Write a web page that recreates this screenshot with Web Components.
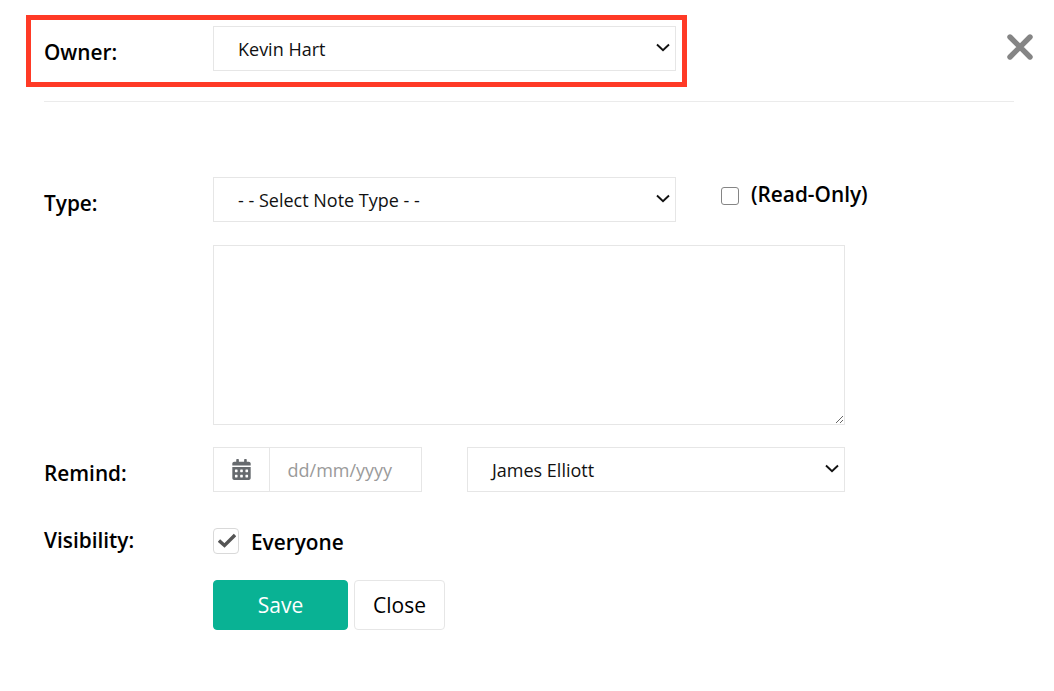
<!DOCTYPE html>
<html>
<head>
<meta charset="utf-8">
<title>Note</title>
<style>
  html, body { margin: 0; background: #fff; }
  body { font-family: "Open Sans", "Noto Sans", sans-serif; color: #000; }
</style>
</head>
<body>
<note-form>
  <form-row slot="owner" label="Owner:" highlighted>
    <select-box style="width:463px">Kevin Hart</select-box>
  </form-row>
  <form-row slot="fields" label="Type:" style="margin-top:75px">
    <select-box style="width:463px">- - Select Note Type - -</select-box>
    <check-box style="margin:5px 0 0 45px" small>(Read-Only)</check-box>
  </form-row>
  <form-row slot="fields" style="margin-top:23px">
    <textarea-box></textarea-box>
  </form-row>
  <form-row slot="fields" label="Remind:" style="margin-top:22px">
    <date-box></date-box>
    <select-box style="width:378px;margin-left:45px">James Elliott</select-box>
  </form-row>
  <form-row slot="fields" label="Visibility:" style="margin-top:35px" tight>
    <check-box checked>Everyone</check-box>
  </form-row>
  <form-row slot="fields" style="margin-top:26px">
    <action-button primary style="width:135px">Save</action-button>
    <action-button style="width:91px;margin-left:6px">Close</action-button>
  </form-row>
</note-form>

<script>
const formTemplate = document.createElement('template');
formTemplate.innerHTML = `
  <style>
    :host { display: block; padding: 26px 40px 0 44px; position: relative; }
    .divider { height: 1px; background: #ebebeb; margin-top: 30px; }
    .close {
      position: absolute; top: 34px; right: 21px;
      width: 26px; height: 26px; display: block;
    }
  </style>
  <slot name="owner"></slot>
  <div class="divider"></div>
  <slot name="fields"></slot>
  <svg class="close" viewBox="0 0 26 26" aria-label="Close">
    <path d="M3 3 L23 23 M23 3 L3 23" stroke="#858585" stroke-width="5.4" stroke-linecap="round" fill="none"/>
  </svg>
`;

class NoteForm extends HTMLElement {
  constructor() {
    super();
    this.attachShadow({ mode: 'open' });
    this.shadowRoot.appendChild(formTemplate.content.cloneNode(true));
  }
}

const rowTemplate = document.createElement('template');
rowTemplate.innerHTML = `
  <style>
    :host { display: flex; align-items: flex-start; position: relative; }
    .label {
      flex: 0 0 169px; font-size: 20.8px; font-weight: 600; line-height: 27px;
      padding-top: 13px; color: #000;
    }
    :host([tight]) .label { padding-top: 0; }
    .content { display: flex; align-items: flex-start; flex: 1; }
    .marker {
      position: absolute; left: -18px; top: -11px;
      width: 661px; height: 72px; box-sizing: border-box;
      border: 5px solid #ff3a26; pointer-events: none; display: none;
    }
    :host([highlighted]) .marker { display: block; }
  </style>
  <div class="label"></div>
  <div class="content"><slot></slot></div>
  <div class="marker"></div>
`;

class FormRow extends HTMLElement {
  constructor() {
    super();
    this.attachShadow({ mode: 'open' });
    this.shadowRoot.appendChild(rowTemplate.content.cloneNode(true));
  }

  connectedCallback() {
    this.shadowRoot.querySelector('.label').textContent = this.getAttribute('label') || '';
  }
}

const selectTemplate = document.createElement('template');
selectTemplate.innerHTML = `
  <style>
    :host {
      display: flex; align-items: center; box-sizing: border-box; height: 45px;
      border: 1px solid #e6e6e6; padding: 0 5px 0 24px; flex: none;
      font-size: 18px; color: #111;
    }
    .value { flex: 1; }
    svg { width: 14px; height: 9px; display: block; margin-top: -2px; }
  </style>
  <span class="value"><slot></slot></span>
  <svg viewBox="0 0 14 9"><path d="M1 1.5 L7 7.2 L13 1.5" fill="none" stroke="#111" stroke-width="1.9"/></svg>
`;

class SelectBox extends HTMLElement {
  constructor() {
    super();
    this.attachShadow({ mode: 'open' });
    this.shadowRoot.appendChild(selectTemplate.content.cloneNode(true));
  }
}

const textareaTemplate = document.createElement('template');
textareaTemplate.innerHTML = `
  <style>
    :host { display: block; flex: none; }
    textarea {
      display: block; width: 632px; height: 180px; box-sizing: border-box;
      border: 1px solid #e6e6e6; border-radius: 0; outline: none; margin: 0; padding: 8px;
      font: inherit; background: #fff;
    }
  </style>
  <textarea></textarea>
`;

class TextareaBox extends HTMLElement {
  constructor() {
    super();
    this.attachShadow({ mode: 'open' });
    this.shadowRoot.appendChild(textareaTemplate.content.cloneNode(true));
  }
}

const dateTemplate = document.createElement('template');
dateTemplate.innerHTML = `
  <style>
    :host {
      display: flex; box-sizing: border-box; width: 209px; height: 45px; flex: none;
      border: 1px solid #e6e6e6; font-size: 18px; color: #9a9a9a;
    }
    .addon {
      flex: 0 0 56px; box-sizing: border-box; border-right: 1px solid #e6e6e6;
      display: flex; align-items: center; justify-content: center;
    }
    .addon svg { width: 19px; height: 21px; display: block; margin-top: -1px; }
    .text { padding-left: 17.5px; line-height: 45px; }
  </style>
  <div class="addon">
    <svg viewBox="0 0 448 512"><path fill="#666a6e" d="M0 464c0 26.5 21.5 48 48 48h352c26.5 0 48-21.5 48-48V192H0v272zm320-196c0-6.6 5.4-12 12-12h40c6.6 0 12 5.4 12 12v40c0 6.6-5.4 12-12 12h-40c-6.6 0-12-5.4-12-12v-40zm0 128c0-6.6 5.4-12 12-12h40c6.6 0 12 5.4 12 12v40c0 6.6-5.4 12-12 12h-40c-6.6 0-12-5.4-12-12v-40zM192 268c0-6.6 5.4-12 12-12h40c6.6 0 12 5.4 12 12v40c0 6.6-5.4 12-12 12h-40c-6.6 0-12-5.4-12-12v-40zm0 128c0-6.6 5.4-12 12-12h40c6.6 0 12 5.4 12 12v40c0 6.6-5.4 12-12 12h-40c-6.6 0-12-5.4-12-12v-40zM64 268c0-6.6 5.4-12 12-12h40c6.6 0 12 5.4 12 12v40c0 6.6-5.4 12-12 12H76c-6.6 0-12-5.4-12-12v-40zm0 128c0-6.6 5.4-12 12-12h40c6.6 0 12 5.4 12 12v40c0 6.6-5.4 12-12 12H76c-6.6 0-12-5.4-12-12v-40zM400 64h-48V16c0-8.8-7.2-16-16-16h-32c-8.8 0-16 7.2-16 16v48H160V16c0-8.8-7.2-16-16-16h-32c-8.8 0-16 7.2-16 16v48H48C21.5 64 0 85.5 0 112v48h448v-48c0-26.5-21.5-48-48-48z"/></svg>
  </div>
  <div class="text">dd/mm/yyyy</div>
`;

class DateBox extends HTMLElement {
  constructor() {
    super();
    this.attachShadow({ mode: 'open' });
    this.shadowRoot.appendChild(dateTemplate.content.cloneNode(true));
  }
}

const checkTemplate = document.createElement('template');
checkTemplate.innerHTML = `
  <style>
    :host { display: flex; align-items: center; flex: none; font-size: 20.8px; font-weight: 600; color: #000; }
    .box {
      box-sizing: border-box; width: 26px; height: 26px; border: 1px solid #d9d9d9;
      border-radius: 4px; margin-right: 12px; display: flex; align-items: center; justify-content: center;
    }
    .box svg { display: none; width: 18px; height: 15px; margin-left: 1px; }
    :host([checked]) .box svg { display: block; }
    :host([small]) .box { width: 18px; height: 18px; border: 1.5px solid #858585; border-radius: 3px; }
    .text { line-height: 27px; position: relative; top: 2px; }
    :host([small]) .text { top: -1px; }
  </style>
  <span class="box">
    <svg viewBox="0 0 18 15"><path d="M1 7.5 L6.5 12.5 L17 2" fill="none" stroke="#555" stroke-width="3.4"/></svg>
  </span>
  <span class="text"><slot></slot></span>
`;

class CheckBox extends HTMLElement {
  constructor() {
    super();
    this.attachShadow({ mode: 'open' });
    this.shadowRoot.appendChild(checkTemplate.content.cloneNode(true));
  }
}

const buttonTemplate = document.createElement('template');
buttonTemplate.innerHTML = `
  <style>
    :host {
      display: flex; align-items: center; justify-content: center; box-sizing: border-box;
      height: 50px; flex: none; border: 1px solid #e6e6e6; border-radius: 4px;
      background: #fff; color: #000; font-size: 21px;
    }
    :host([primary]) { background: #09b294; border-color: #09b294; color: #fff; }
  </style>
  <slot></slot>
`;

class ActionButton extends HTMLElement {
  constructor() {
    super();
    this.attachShadow({ mode: 'open' });
    this.shadowRoot.appendChild(buttonTemplate.content.cloneNode(true));
  }
}

customElements.define('note-form', NoteForm);
customElements.define('form-row', FormRow);
customElements.define('select-box', SelectBox);
customElements.define('textarea-box', TextareaBox);
customElements.define('date-box', DateBox);
customElements.define('check-box', CheckBox);
customElements.define('action-button', ActionButton);
</script>
</body>
</html>
